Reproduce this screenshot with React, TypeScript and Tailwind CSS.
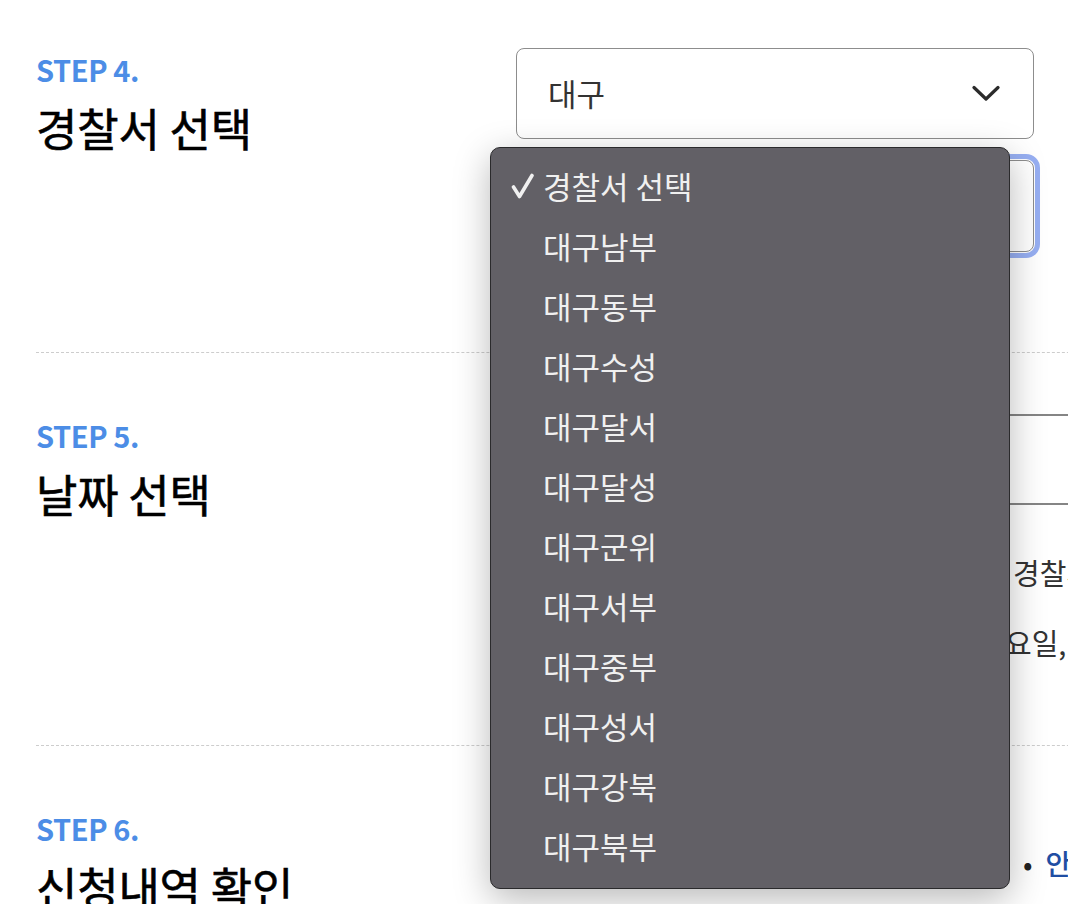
import React from 'react'

const STATIONS = [
  '대구남부',
  '대구동부',
  '대구수성',
  '대구달서',
  '대구달성',
  '대구군위',
  '대구서부',
  '대구중부',
  '대구성서',
  '대구강북',
  '대구북부',
]

const StepHead: React.FC<{ step: string; title: string }> = ({ step, title }) => (
  <div className="w-[480px] shrink-0 pt-[5px]">
    <div className="text-[29px] leading-[32px] font-bold tracking-[-0.4px] text-[#4c8de6]">
      STEP {step}.
    </div>
    <div className="mt-[18px] text-[45px] leading-[50px] font-normal tracking-[-0.2px] text-black [-webkit-text-stroke:0.6px_black]">
      {title}
    </div>
  </div>
)

const Chevron = () => (
  <svg width="28" height="17" viewBox="0 0 28 17" fill="none" aria-hidden>
    <path d="M2 2.5L14 14L26 2.5" stroke="#2b2b2b" strokeWidth="3.2" strokeLinecap="round" strokeLinejoin="round" />
  </svg>
)

const Check = () => (
  <svg width="23" height="26" viewBox="0 0 23 26" fill="none" aria-hidden>
    <path d="M2.5 14L8.5 23.5L21 2.5" stroke="#f0f0f0" strokeWidth="3.6" strokeLinecap="round" strokeLinejoin="round" />
  </svg>
)

export default function App() {
  return (
    <div className="relative h-[904px] w-full overflow-hidden bg-white font-['Noto_Sans_CJK_KR','Noto_Sans',sans-serif]">
      <div className="w-[1200px] pl-9">
        {/* step 4 */}
        <section className="flex pt-12 pb-[100px]">
          <StepHead step="4" title="경찰서 선택" />
          <div className="flex flex-col">
            <div className="flex h-[91px] w-[518px] items-center justify-between rounded-lg border-[1.5px] border-[#8d8d8d] pr-[33px] pl-[31px]">
              <span className="text-[31px] text-[#333]">대구</span>
              <Chevron />
            </div>
            <div className="mt-[21px] flex h-[92px] w-[518px] items-center justify-between rounded-lg border-[1.5px] border-[#8d8d8d] pr-[33px] pl-[31px] outline-[5px] outline-offset-[1px] outline-[#97aff2]">
              <span className="text-[31px] text-[#333]">경찰서 선택</span>
              <Chevron />
            </div>
          </div>
        </section>

        {/* step 5 */}
        <section className="flex border-t border-dashed border-[#cdcdcd] pt-[61px] pb-[83px]">
          <StepHead step="5" title="날짜 선택" />
          <div className="flex flex-col">
            <div className="flex h-[91px] w-[600px] items-center border-y-2 border-[#858585] px-6 text-[28px] text-[#333]">
              2024년 5월
            </div>
            <ul className="mt-[47px] flex flex-col gap-[30px] text-[29px] leading-[40px] whitespace-nowrap text-[#333]">
              <li className="flex">
                <span className="w-[497px] shrink-0 overflow-hidden">• 방문신청 후 예약하신 일자에 관할</span>
                <span>경찰서를 방문하시기 바랍니다.</span>
              </li>
              <li className="flex">
                <span className="w-[489px] shrink-0 overflow-hidden">• 방문 예약은 평일에만 가능하며 토</span>
                <span>요일, 일요일 및 공휴일은 불가합니다.</span>
              </li>
            </ul>
          </div>
        </section>

        {/* step 6 */}
        <section className="flex border-t border-dashed border-[#cdcdcd] pt-[61px]">
          <StepHead step="6" title="신청내역 확인" />
          <div className="mt-[36px] flex text-[28px] leading-[40px] whitespace-nowrap">
            <span className="w-[507px] shrink-0 overflow-hidden text-[#333]">• 신청하신 내역을 확인해 주세요.</span>
            <span className="text-[#222]">•</span>
            <span className="ml-[13px] font-medium text-[#1f4ea3]">안내사항 보기</span>
          </div>
        </section>
      </div>

      {/* open native-style select menu */}
      <div className="absolute top-[147px] left-[490px] z-10 w-[520px] rounded-[10px] border border-[#2a2a2c] bg-[#626066] pt-[8px] pb-[12px] shadow-[0_10px_36px_rgba(0,0,0,0.28)]">
        <div className="flex h-[60px] items-center">
          <span className="flex w-[52px] justify-end pr-[9px]">
            <Check />
          </span>
          <span className="text-[31px] text-[#f0f0f0]">경찰서 선택</span>
        </div>
        {STATIONS.map((name) => (
          <div key={name} className="flex h-[60px] items-center pl-[52px] text-[31px] text-[#f0f0f0]">
            {name}
          </div>
        ))}
      </div>
    </div>
  )
}
